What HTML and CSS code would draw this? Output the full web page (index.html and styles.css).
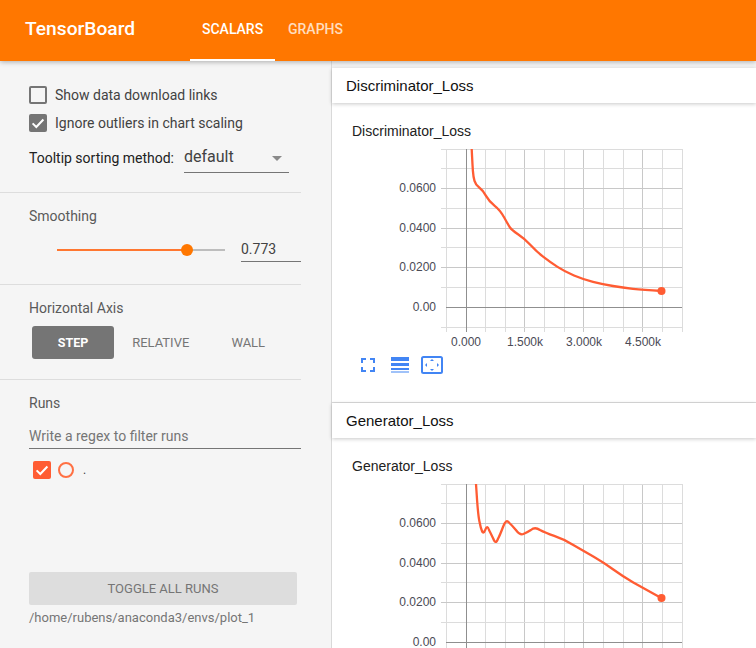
FILE: index.html
```html
<!DOCTYPE html>
<html lang="en">
<head>
<meta charset="utf-8">
<title>TensorBoard</title>
<link rel="stylesheet" href="styles.css">
</head>
<body>
<svg class="defs" width="0" height="0" aria-hidden="true">
  <defs>
    <g id="grid">
      <path class="minor" d="M446.500 149V327M485.500 149V327M505.500 149V327M544.500 149V327M564.500 149V327M603.500 149V327M623.500 149V327M662.500 149V327M682.500 149V327"/>
      <path class="major" d="M524.500 149V332M583.500 149V332M642.500 149V332"/>
      <path class="minor" d="M441 149.500H682M441 168.500H682M441 208.500H682M441 247.500H682M441 287.500H682M441 327.500H682"/>
      <path class="major" d="M441 188.500H682M441 228.500H682M441 267.500H682"/>
      <path class="minor" d="M446.500 327V332M485.500 327V332M505.500 327V332M544.500 327V332M564.500 327V332M603.500 327V332M623.500 327V332M662.500 327V332M682.500 327V332"/>
      <path class="axis" d="M466.500 149V332M446 307.500H682"/>
    </g>
  </defs>
</svg>
<header class="topbar">
  <div class="brand">TensorBoard</div>
  <nav class="tabs">
    <a class="tab tab-active">SCALARS</a>
    <a class="tab tab-next">GRAPHS</a>
  </nav>
</header>
<main class="main">
  <aside class="sidebar">
    <section class="sec sec-options">
      <label class="check-row"><span class="box"></span><span>Show data download links</span></label>
      <label class="check-row"><span class="box box-on"><svg viewBox="0 0 18 18" width="18" height="18"><path d="M3.600 9.400l3.700 3.600 7.100-7.500" fill="none" stroke="#fff" stroke-width="2"/></svg></span><span>Ignore outliers in chart scaling</span></label>
      <div class="tooltip-row">
        <span class="tooltip-label">Tooltip sorting method:</span>
        <div class="select"><span>default</span><i class="caret"></i></div>
      </div>
    </section>
    <section class="sec sec-smooth">
      <div class="sec-title">Smoothing</div>
      <div class="slider-row">
        <div class="slider"><div class="slider-fill"></div><div class="slider-knob"></div></div>
        <div class="slider-value">0.773</div>
      </div>
    </section>
    <section class="sec sec-axis">
      <div class="sec-title">Horizontal Axis</div>
      <div class="axis-buttons">
        <div class="axis-btn axis-btn-on">STEP</div>
        <div class="axis-btn">RELATIVE</div>
        <div class="axis-btn">WALL</div>
      </div>
    </section>
    <section class="sec-runs">
      <div class="sec-title">Runs</div>
      <div class="filter">Write a regex to filter runs</div>
      <div class="run-row">
        <span class="run-box"><svg viewBox="0 0 18 18" width="18" height="18"><path d="M3.600 9.400l3.700 3.600 7.100-7.500" fill="none" stroke="#fff" stroke-width="2"/></svg></span>
        <span class="run-circle"></span>
        <span class="run-name">.</span>
      </div>
      <div class="toggle">TOGGLE ALL RUNS</div>
      <div class="logdir">/home/rubens/anaconda3/envs/plot_1</div>
    </section>
  </aside>
  <div class="content">
    <section class="card">
      <h2 class="card-head">Discriminator_Loss</h2>
      <div class="card-body">
        <div class="chart-title">Discriminator_Loss</div>
        <svg class="chart" viewBox="332 143 424 197" width="424" height="197">
          <use href="#grid"/>
          <g class="ticks">
            <text x="436" y="192">0.0600</text>
            <text x="436" y="232">0.0400</text>
            <text x="436" y="271">0.0200</text>
            <text x="436" y="311">0.00</text>
          </g>
          <g class="xticks">
            <text x="466" y="346">0.000</text>
            <text x="525" y="346">1.500k</text>
            <text x="584" y="346">3.000k</text>
            <text x="643" y="346">4.500k</text>
          </g>
          <path class="line" d="M471.700 149L472.100 157Q472.500 165 472.900 170.900Q473.300 176.700 474.500 180.900Q475.700 185 479.200 187.500Q482.700 190 486 195.900Q489.300 201.700 494.700 205.900Q500 210 504.200 217.500Q508.300 225 510 227.500Q511.700 230 518 234.200Q524.300 238.300 530.500 245Q536.700 251.700 543.400 256.900Q550 262 557.500 266.900Q565 271.700 574 275.500Q583 279.300 593 281.800Q603 284.300 613 286Q623 287.700 633 288.900Q643 290 661.700 291"/>
          <circle class="dot" cx="661.500" cy="291" r="4"/>
        </svg>
        <div class="chart-tools">
          <svg class="tool" viewBox="0 0 14 14" width="14" height="14"><path d="M1 5V1H5M9 1H13V5M13 9V13H9M5 13H1V9" fill="none" stroke="#4285f4" stroke-width="2"/></svg>
          <svg class="tool tool-lines" viewBox="0 0 18 16" width="18" height="16"><path d="M0 0H18V4H0ZM0 6H18V9H0ZM0 11H18V13H0ZM0 14.500H18V15.500H0Z" fill="#4285f4"/></svg>
          <svg class="tool tool-fit" viewBox="0 0 22 18" width="22" height="18"><rect x="1" y="1" width="20" height="16" rx="1.500" fill="none" stroke="#4285f4" stroke-width="2"/><path d="M11 3l2 2H9ZM11 15l2-2H9ZM4 9l2-2V11ZM18 9l-2-2V11Z" fill="#4285f4"/></svg>
        </div>
      </div>
    </section>
    <section class="card">
      <h2 class="card-head">Generator_Loss</h2>
      <div class="card-body">
        <div class="chart-title">Generator_Loss</div>
        <svg class="chart" viewBox="332 143 424 197" width="424" height="197">
          <use href="#grid"/>
          <g class="ticks">
            <text x="436" y="192">0.0600</text>
            <text x="436" y="232">0.0400</text>
            <text x="436" y="271">0.0200</text>
            <text x="436" y="311">0.00</text>
          </g>
          <path class="line" d="M476 149L477.100 165.500Q478.300 181.700 479.500 186.700Q480.700 193 482 196Q483.300 199.500 485.300 194.700Q487.300 189.500 489 195Q490.700 198.300 493.200 203.500Q495.700 210 497.900 204Q500 200 503 192Q506 183.500 508.900 187.500Q511.700 190 515.900 195Q520 200.500 523.400 199Q526.700 197.700 530.900 195Q535 191.500 540 195Q545 197.700 554.200 200.900Q563.300 204 573.300 209.900Q583.300 215.700 593.300 221.500Q603.300 227.300 613.300 234.500Q623.300 241.700 633.300 247.500L661.700 263.300"/>
          <circle class="dot" cx="661.500" cy="263" r="4"/>
        </svg>
      </div>
    </section>
  </div>
</main>
</body>
</html>
```

FILE: styles.css
```css
* { box-sizing: border-box; }
html, body { margin: 0; height: 648px; overflow: hidden; }
body { font-family: Roboto, sans-serif; font-size: 14px; color: #424242; background: #f5f5f5; }
.defs { position: absolute; }

.topbar { position: relative; z-index: 2; height: 61px; background: #ff7700; display: flex; box-shadow: 0 1px 5px rgba(0,0,0,.3); color: #fff; }
.brand { width: 190px; padding-left: 25px; font-size: 19.200px; font-weight: 500; line-height: 58px; }
.tabs { display: flex; }
.tab { height: 61px; padding: 0 12px; font-size: 14px; font-weight: 500; line-height: 58px; color: rgba(255,255,255,.75); }
.tab-active { width: 85px; color: #fff; border-bottom: 2px solid #fff; }
.tab-next { margin-left: 1px; }

.main { display: flex; height: 587px; overflow: hidden; }
.sidebar { flex: 0 0 332px; height: 587px; border-right: 1px solid #ddd; background: #f5f5f5; }
.sec { width: 301px; border-bottom: 1px solid #ddd; padding-left: 29px; }
.sec-options { height: 132px; padding-top: 25px; }
.sec-smooth { height: 92px; padding-top: 14px; }
.sec-axis { height: 95px; padding-top: 14px; }
.sec-runs { width: 301px; padding: 14px 0 0 29px; }
.sec-title { height: 18px; line-height: 18px; color: #5a5a5a; }

.check-row { display: flex; align-items: center; height: 18px; margin-bottom: 10px; color: #424242; }
.box { width: 18px; height: 18px; margin-right: 8px; border: 2px solid #757575; border-radius: 2px; display: block; }
.box-on { background: #757575; border: 0; }
.box svg, .run-box svg { display: block; }
.tooltip-row { display: flex; margin-top: 14px; height: 28px; }
.tooltip-label { width: 155px; line-height: 25px; color: #212121; }
.select { width: 105px; height: 27px; border-bottom: 1px solid #757575; font-size: 16px; line-height: 21px; color: #424242; display: flex; justify-content: space-between; }
.caret { width: 0; height: 0; margin: 10px 7px 0 0; border: 5px solid transparent; border-top: 5px solid #8a8a8a; border-bottom: 0; }

.slider-row { display: flex; margin-top: 13px; height: 34px; }
.slider { position: relative; width: 168px; height: 2px; margin: 11px 0 0 28px; background: #bdbdbd; }
.slider-fill { width: 130px; height: 2px; background: #ff7730; }
.slider-knob { position: absolute; left: 124px; top: -5px; width: 12px; height: 12px; border-radius: 50%; background: #ff7700; }
.slider-value { width: 60px; height: 24px; margin-left: 16px; border-bottom: 1px solid #757575; line-height: 22px; color: #424242; }

.axis-buttons { display: flex; margin: 9px 0 0 3px; }
.axis-btn { width: 87.500px; height: 33px; line-height: 33px; font-size: 13px; text-align: center; color: #757575; font-weight: 400; }
.axis-btn-on { width: 82px; margin-right: 3px; background: #757575; color: #fff; border-radius: 3px; font-weight: 700; font-size: 12.500px; }

.filter { height: 23px; margin-top: 14px; border-bottom: 1px solid #757575; line-height: 20px; color: #757575; width: 272px; }
.run-row { display: flex; align-items: center; height: 18px; margin: 12px 0 0 4px; }
.run-box { width: 18px; height: 18px; border-radius: 2px; background: #ff5c33; }
.run-circle { width: 16px; height: 16px; margin-left: 7px; border: 2px solid #ff7043; border-radius: 50%; }
.run-name { margin-left: 9px; font-size: 12px; color: #424242; }
.toggle { width: 268px; height: 33px; margin-top: 93px; border-radius: 2px; background: #ddd; line-height: 33px; text-align: center; font-size: 13px; color: #757575; }
.logdir { margin-top: 4px; font-size: 13px; line-height: 17px; color: #757575; }

.content { flex: 1; min-width: 0; padding-top: 7px; }
.card { margin-bottom: 1px; }
.card-head { height: 35px; margin: 0; padding-left: 14px; background: #fff; font: 400 15px/35px "Liberation Sans", Arial, sans-serif; color: #111; box-shadow: 0 1px 4px rgba(0,0,0,.22); position: relative; }
.card-body { height: 299px; padding: 20px 0 0; background: #fff; box-shadow: 0 1px 1px rgba(0,0,0,.1); }
.chart-title { padding-left: 20px; font: 400 14px/16px "Liberation Sans", Arial, sans-serif; color: #212121; }
.chart { display: block; margin-top: 4px; overflow: visible; }
.minor { stroke: #dcdcdc; fill: none; }
.major { stroke: #c8c8c8; fill: none; }
.axis { stroke: #8f8f8f; fill: none; }
.chart text { font: 12px "Liberation Sans", Arial, sans-serif; fill: #4a4a55; }
.ticks text { text-anchor: end; }
.xticks text { text-anchor: middle; }
.line { fill: none; stroke: #ff5c33; stroke-width: 2.300; stroke-linejoin: round; }
.dot { fill: #ff5c33; }

.chart-tools { display: flex; align-items: center; margin: 16px 0 0 29px; height: 18px; }
.tool-lines { margin-left: 16px; }
.tool-fit { margin-left: 12px; }
```
